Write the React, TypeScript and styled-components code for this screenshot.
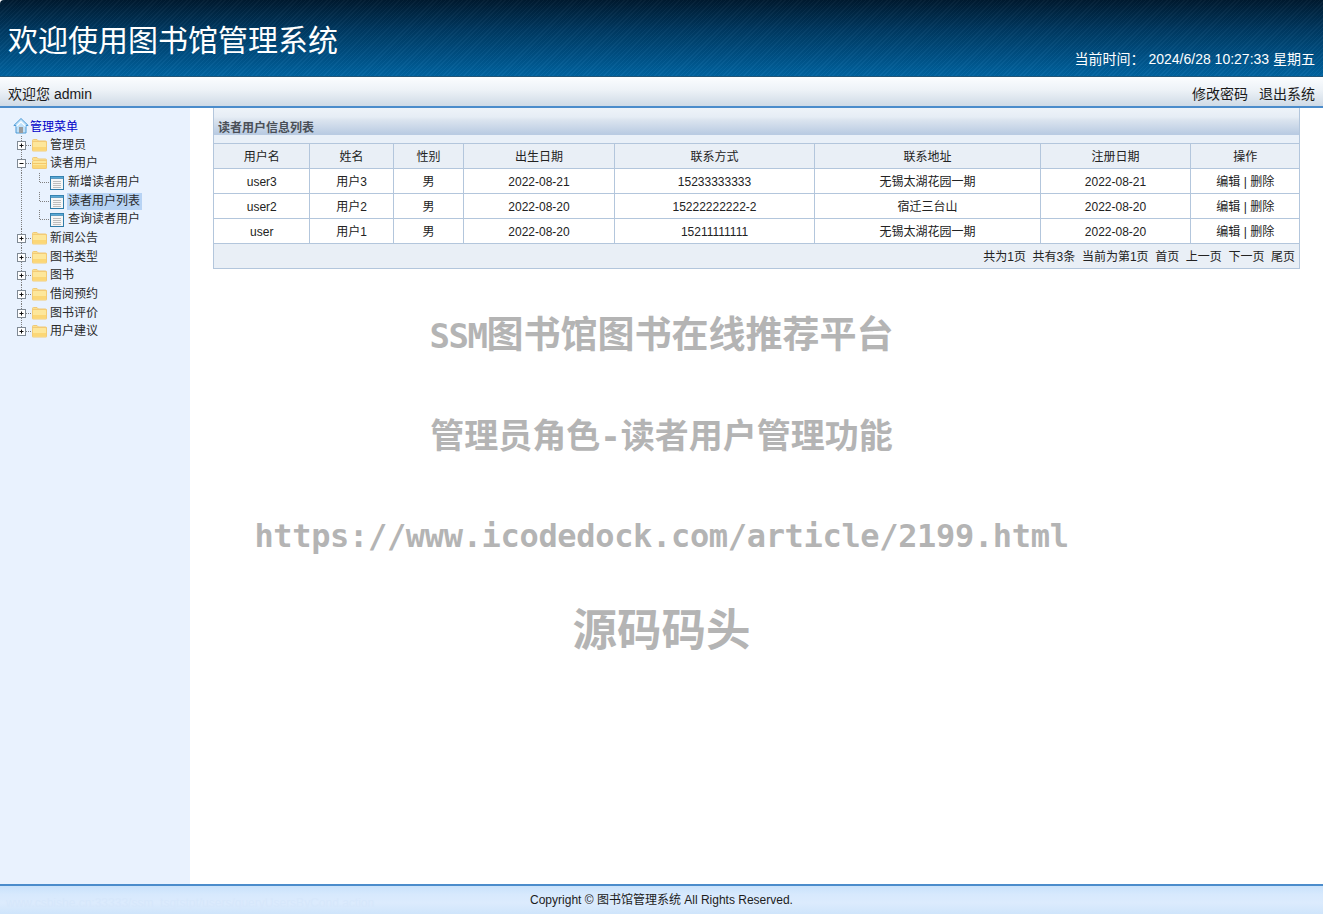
import React from "react";
import styled, { createGlobalStyle } from "styled-components";

const Global = createGlobalStyle`
  html, body { margin: 0; padding: 0; height: 100%; background: #fff; }
  body { font-family: "Liberation Sans", "Noto Sans CJK SC", sans-serif; font-size: 12px; color: #222; overflow: hidden; }
  * { box-sizing: border-box; }
`;

const Page = styled.div`
  position: relative;
  height: 914px;
  display: flex;
  flex-direction: column;
  overflow: hidden;
`;

const Header = styled.header`
  height: 77px;
  flex: none;
  display: flex;
  justify-content: space-between;
  padding: 0 8px;
  color: #fff;
  border-bottom: 1px solid #1f5578;
  border-top-left-radius: 4px;
  background:
    repeating-linear-gradient(135deg, rgba(255,255,255,.03) 0 1px, rgba(0,0,0,.035) 1px 3px),
    linear-gradient(180deg, #001a30 0%, #003a63 40%, #0064a2 100%);
`;

const Title = styled.h1`
  margin: 22px 0 0;
  font-size: 30px;
  line-height: 38px;
  font-weight: 400;
`;

const Clock = styled.div`
  align-self: flex-end;
  margin-bottom: 8px;
  font-size: 14px;
  line-height: 18px;
  white-space: pre;
`;

const UserBar = styled.div`
  height: 31px;
  flex: none;
  display: flex;
  justify-content: space-between;
  align-items: center;
  padding: 3px 8px 0;
  font-size: 14px;
  color: #1a1a1a;
  border-bottom: 2px solid #4b8ccb;
  background: linear-gradient(180deg, #fbfdff 0%, #edf2f7 45%, #cfdae6 100%);
`;

const BarLinks = styled.div`
  display: flex;
  gap: 11px;
`;

const Body = styled.div`
  flex: 1;
  min-height: 0;
  display: flex;
`;

const Sidebar = styled.aside`
  width: 190px;
  flex: none;
  padding: 9.3px 0 0 13px;
  background: #e9f2fe;
`;

const TreeRow = styled.div`
  height: 18.67px;
  display: flex;
  align-items: center;
  white-space: nowrap;
  color: #333;
`;

const RootLabel = styled.span`
  color: #0000c8;
  margin: -2px 0 0 1px;
`;

const NodeLabel = styled.span<{ $selected?: boolean; $child?: boolean }>`
  display: inline-block;
  height: 17px;
  line-height: 17px;
  padding: 0 2px 0 1px;
  margin-left: ${p => (p.$child ? "2px" : "0")};
  background: ${p => (p.$selected ? "#b7d3f4" : "transparent")};
  color: #2b2b2b;
`;

const TreeSvg = styled.svg`
  flex: none;
  display: block;
`;

const Main = styled.main`
  flex: 1;
  min-width: 0;
  padding: 0 23px;
`;

const Panel = styled.section`
  border: 1px solid #b3c6dc;
  border-top: none;
`;

const PanelTitle = styled.div`
  height: 35px;
  padding: 13px 0 0 4px;
  font-size: 12px;
  line-height: 14px;
  font-weight: 700;
  color: #4a4f57;
  background: linear-gradient(180deg, #eef3f9 0, #e6edf5 9px, #dbe4ef 12px, #b9cbe2 26px, #b9cbe2 27px, #e9f0f8 27px, #e9f0f8 100%);
`;

const DataTable = styled.table`
  width: 1085px;
  table-layout: fixed;
  border-collapse: collapse;
  font-size: 12px;
  line-height: 14px;
  color: #222;
`;

const Th = styled.th`
  height: 25px;
  padding: 1px 0 0 1px;
  font-weight: 400;
  text-align: center;
  background: #e9eff6;
  border: 1px solid #b3c6dc;
  &:first-child { border-left: none; }
  &:last-child { border-right: none; }
`;

const Td = styled.td`
  height: 25px;
  padding: 1px 0 0 1px;
  text-align: center;
  border: 1px solid #b3c6dc;
  &:first-child { border-left: none; }
  &:last-child { border-right: none; }
`;

const Pager = styled.div`
  height: 24px;
  display: flex;
  justify-content: flex-end;
  align-items: center;
  gap: 6.6px;
  padding: 0 4px 2px 0;
  background: #e9eff6;
`;

const Footer = styled.footer`
  position: relative;
  height: 30px;
  flex: none;
  display: flex;
  justify-content: center;
  align-items: center;
  padding-bottom: 4px;
  font-size: 12px;
  color: #1c1c1c;
  border-top: 2px solid #4b8ccb;
  background: linear-gradient(180deg, #c9e2fb 0%, #d7e9fd 30%, #dcebfd 60%, #cfe5fb 100%);
`;

const GhostUrl = styled.span`
  position: absolute;
  left: 6px;
  top: 10px;
  font-size: 12px;
  color: #d6e7fb;
`;

const Watermark = styled.div`
  position: absolute;
  inset: 0;
  pointer-events: none;
  font-family: "DejaVu Sans Mono", "Noto Sans CJK SC", monospace;
  font-weight: 700;
  color: #b4b4b4;
  white-space: nowrap;
`;

const MarkLine = styled.div<{ $size: number; $top: number; $h: number; $spacing?: number }>`
  position: absolute;
  left: 0;
  right: 0;
  text-align: center;
  top: ${p => p.$top}px;
  height: ${p => p.$h}px;
  line-height: ${p => p.$h}px;
  font-size: ${p => p.$size}px;
  letter-spacing: ${p => p.$spacing ?? 0}px;
`;

const MarkLatin = styled.span`
  font-size: 34px;
  letter-spacing: -1.47px;
`;

const Connector = ({ kind }: { kind: "plus" | "minus" | "line" | "join" | "plusEnd" }) => {
  const dot = { stroke: "#7f7f7f", strokeWidth: 1, strokeDasharray: "1 1", fill: "none" } as const;
  return (
    <TreeSvg width="18" height="19" viewBox="0 0 18 19">
      {kind === "line" && <path d="M8.5 0V19" {...dot} />}
      {kind === "join" && <path d="M8.5 0V9.5H18" {...dot} />}
      {(kind === "plus" || kind === "minus" || kind === "plusEnd") && (
        <>
          <path d={kind === "plusEnd" ? "M8.5 0V5" : "M8.5 0V5M8.5 14V19"} {...dot} />
          <path d="M13 9.5H18" {...dot} />
          <rect x="4.5" y="5.5" width="8" height="8" fill="#fff" stroke="#808a94" />
          <path d={kind === "minus" ? "M6.5 9.5H10.5" : "M6.5 9.5H10.5M8.5 7.5V11.5"} stroke="#111" strokeWidth="1" />
        </>
      )}
    </TreeSvg>
  );
};

const Folder = ({ open }: { open?: boolean }) => (
  <TreeSvg width="18" height="19" viewBox="0 0 18 19">
    <path d="M1.5 6V4.5q0-1 1-1h3.5l1.5 1.5h7q1 0 1 1V7" fill="#fbe08e" stroke="#efc977" />
    <rect x="1" y={open ? 6 : 5} width="15" height={open ? 9 : 10.5} rx="1.5" fill="#f3cb76" />
    <rect x="2" y={open ? 7 : 6} width="13" height={open ? 7 : 8.5} rx="0.5" fill="#fde79b" />
    <rect x="2" y={11} width="13" height={open ? 3 : 3.5} fill="#fbd777" />
    {open && <path d="M1 9.5H16" stroke="#f4c869" />}
  </TreeSvg>
);

const PageIcon = () => (
  <TreeSvg width="16" height="19" viewBox="0 0 16 19">
    <rect x="1.5" y="3.5" width="13" height="13" fill="#f6f6f6" stroke="#2f7ba8" />
    <rect x="1.5" y="3.5" width="13" height="2" fill="#58a9d6" stroke="#2f7ba8" strokeWidth="0.6" />
    <path d="M4 8.5H12M4 10.5H12M4 12.5H12M4 14.5H12" stroke="#bdbdbd" />
  </TreeSvg>
);

const HomeIcon = () => (
  <TreeSvg width="16" height="19" viewBox="0 0 16 19">
    <path d="M8 1.5L0.8 8.5H3V16H13V8.5H15.2Z" fill="#bfe1fa" stroke="#4f9bd6" strokeLinejoin="round" />
    <path d="M8 4L3.5 8.5V10L8 5.8L12.5 10V8.5Z" fill="#fff" />
    <rect x="6" y="10" width="4" height="6" fill="#9b9b9b" />
  </TreeSvg>
);

const columns = [95, 84, 70, 151, 200, 226, 150, 109];

const headers = ["用户名", "姓名", "性别", "出生日期", "联系方式", "联系地址", "注册日期", "操作"];

const rows = [
  ["user3", "用户3", "男", "2022-08-21", "15233333333", "无锡太湖花园一期", "2022-08-21", "编辑 | 删除"],
  ["user2", "用户2", "男", "2022-08-20", "15222222222-2", "宿迁三台山", "2022-08-20", "编辑 | 删除"],
  ["user", "用户1", "男", "2022-08-20", "15211111111", "无锡太湖花园一期", "2022-08-20", "编辑 | 删除"],
];

const pager = ["共为1页", "共有3条", "当前为第1页", "首页", "上一页", "下一页", "尾页"];

const after = ["新闻公告", "图书类型", "图书", "借阅预约", "图书评价", "用户建议"];

const children = [
  { label: "新增读者用户" },
  { label: "读者用户列表", selected: true },
  { label: "查询读者用户" },
];

export default function App() {
  return (
    <Page>
      <Global />
      <Header>
        <Title>欢迎使用图书馆管理系统</Title>
        <Clock>当前时间： 2024/6/28 10:27:33 星期五</Clock>
      </Header>
      <UserBar>
        <span>欢迎您 admin</span>
        <BarLinks>
          <span>修改密码</span>
          <span>退出系统</span>
        </BarLinks>
      </UserBar>
      <Body>
        <Sidebar>
          <TreeRow>
            <HomeIcon />
            <RootLabel>管理菜单</RootLabel>
          </TreeRow>
          <TreeRow>
            <Connector kind="plus" />
            <Folder />
            <NodeLabel>管理员</NodeLabel>
          </TreeRow>
          <TreeRow>
            <Connector kind="minus" />
            <Folder open />
            <NodeLabel>读者用户</NodeLabel>
          </TreeRow>
          {children.map(c => (
            <TreeRow key={c.label}>
              <Connector kind="line" />
              <Connector kind="join" />
              <PageIcon />
              <NodeLabel $child $selected={c.selected}>{c.label}</NodeLabel>
            </TreeRow>
          ))}
          {after.map((label, i) => (
            <TreeRow key={label}>
              <Connector kind={i === after.length - 1 ? "plusEnd" : "plus"} />
              <Folder />
              <NodeLabel>{label}</NodeLabel>
            </TreeRow>
          ))}
        </Sidebar>
        <Main>
          <Panel>
            <PanelTitle>读者用户信息列表</PanelTitle>
            <DataTable>
              <colgroup>
                {columns.map((w, i) => (
                  <col key={i} style={{ width: w }} />
                ))}
              </colgroup>
              <thead>
                <tr>
                  {headers.map(h => (
                    <Th key={h}>{h}</Th>
                  ))}
                </tr>
              </thead>
              <tbody>
                {rows.map(r => (
                  <tr key={r[0]}>
                    {r.map((c, i) => (
                      <Td key={i}>{c}</Td>
                    ))}
                  </tr>
                ))}
              </tbody>
            </DataTable>
            <Pager>
              {pager.map(p => (
                <span key={p}>{p}</span>
              ))}
            </Pager>
          </Panel>
        </Main>
      </Body>
      <Footer>
        <GhostUrl>www.csbishe.cn:33333/ssm_tsgtstpt/users/queryUsersByCond.action</GhostUrl>
        <span>Copyright © 图书馆管理系统 All Rights Reserved.</span>
      </Footer>
      <Watermark>
        <MarkLine $size={37} $top={314} $h={44}><MarkLatin>SSM</MarkLatin>图书馆图书在线推荐平台</MarkLine>
        <MarkLine $size={34} $top={414} $h={44}>管理员角色-读者用户管理功能</MarkLine>
        <MarkLine $size={32} $top={514} $h={44} $spacing={-0.33}>https://www.icodedock.com/article/2199.html</MarkLine>
        <MarkLine $size={44.5} $top={604} $h={54}>源码码头</MarkLine>
      </Watermark>
    </Page>
  );
}
